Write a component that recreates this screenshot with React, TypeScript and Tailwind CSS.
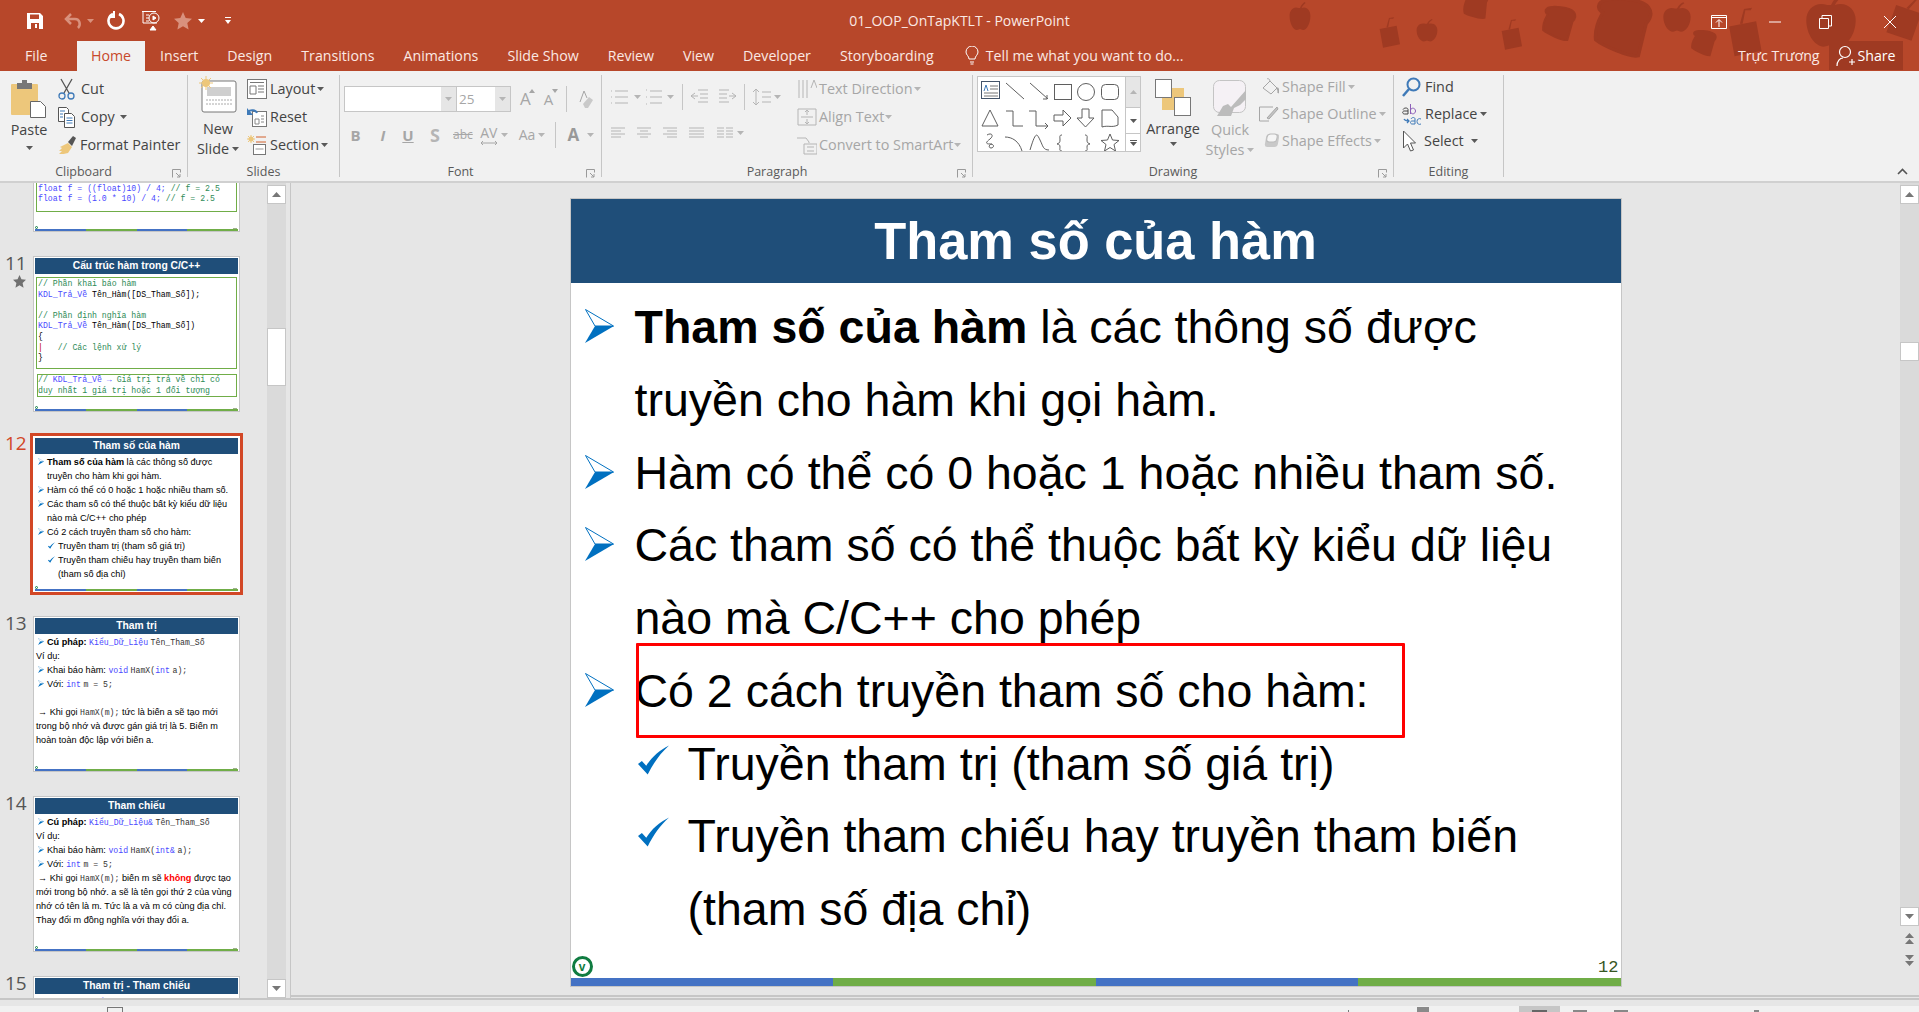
import type { ReactNode } from "react";

const ui = "font-['Open_Sans','Noto_Sans',sans-serif]";
const slideFont = "font-['Liberation_Sans',Arial,sans-serif]";
const mono = "font-['Liberation_Mono',monospace]";

function Caret({ dim = false, className = "" }: { dim?: boolean; className?: string }) {
  return (
    <svg width="7" height="4" viewBox="0 0 7 4" className={className}>
      <path d="M0 0h7L3.5 4z" fill={dim ? "#b5b5b5" : "#595959"} />
    </svg>
  );
}

function RibbonRow({ icon, label, caret, dim, gap = "gap-[6px]", h = "h-7" }: { icon: ReactNode; label: string; caret?: boolean; dim?: boolean; gap?: string; h?: string }) {
  return (
    <div className={`flex items-center ${gap} ${h} ${dim ? "text-[#a6a6a6]" : "text-[#444]"}`}>
      {icon}
      <span>{label}</span>
      {caret && <Caret dim={dim} className="ml-[-1px]" />}
    </div>
  );
}

function Launcher() {
  return (
    <svg width="9" height="9" viewBox="0 0 9 9" className="absolute right-[6px] bottom-[-1px]" fill="none" stroke="#9a9a9a">
      <path d="M.5 8.5v-8h8v3M4 4l4 4M8 5v3H5" />
    </svg>
  );
}

function Group({ w, label, launcher, children }: { w: string; label: string; launcher?: boolean; children: ReactNode }) {
  return (
    <div className={`relative ${w} my-[4px] border-r border-[#c6c6c6]`}>
      <div className="h-[89px] flex">{children}</div>
      <div className={`h-[16px] text-center text-[12.5px] leading-[16px] text-[#595959] ${launcher ? "pr-[20px]" : ""}`}>{label}</div>
      {launcher && <Launcher />}
    </div>
  );
}

/* ---------- ribbon icons ---------- */
const Scissors = () => (
  <svg width="17" height="22" viewBox="0 0 17 22" fill="none" stroke="#555" strokeWidth="1.3">
    <path d="M3 1l8 14M14 1L6 15" />
    <circle cx="4" cy="18" r="3" stroke="#3f7ab8" />
    <circle cx="13" cy="18" r="3" stroke="#3f7ab8" />
  </svg>
);
const CopyIcon = () => (
  <svg width="17" height="21" viewBox="0 0 17 21" fill="#fff" stroke="#555">
    <path d="M.5.5h8l2 2v12H.5z" />
    <path d="M6.5 6.5h7l3 3v11h-10z" />
    <path d="M8.500 11h6M8.500 13.500h6M8.500 16h6" stroke="#3f7ab8" />
    <path d="M2 4h5M2 7h3M2 10h3" stroke="#3f7ab8" />
  </svg>
);
const Brush = () => (
  <svg width="18" height="20" viewBox="0 0 18 20">
    <path d="M10 8l4 4-4 6c-3 1-6 1-9 1l3-3-3 0 3-3-2-1z" fill="#edc77b" />
    <path d="M10 7l5-6 3 2-4 8z" fill="#555" />
  </svg>
);
const PasteIcon = () => (
  <svg width="36" height="38" viewBox="0 0 36 38">
    <rect x="0" y="4" width="27" height="31" rx="1" fill="#edc77b" />
    <path d="M6 3h5V0h5v3h5v6H6z" fill="#777" />
    <path d="M19.500 21.500h10l5 5v11h-15z" fill="#fff" stroke="#666" />
  </svg>
);
const NewSlideIcon = () => (
  <svg width="38" height="37" viewBox="0 0 38 37">
    <rect x="3" y="5" width="34" height="31" rx="2" fill="#fff" stroke="#777" />
    <rect x="8" y="11" width="24" height="9" fill="#cfcfcf" />
    <path d="M7 24h26M7 28h26" stroke="#aaa" strokeDasharray="2 1" />
    <circle cx="7" cy="7" r="4" fill="#edc77b" />
    <path d="M7 0v14M0 7h14M2 2l10 10M12 2L2 12" stroke="#edc77b" />
  </svg>
);
const LayoutIcon = () => (
  <svg width="20" height="20" viewBox="0 0 20 20" fill="none" stroke="#777">
    <rect x=".5" y=".5" width="19" height="19" fill="#fff" />
    <path d="M3 3.500h14M3 7h6v8H3zM11 7h6M11 10h6M11 13h6" />
  </svg>
);
const ResetIcon = () => (
  <svg width="20" height="20" viewBox="0 0 20 20">
    <rect x="5.500" y="4.500" width="14" height="15" fill="#fff" stroke="#777" />
    <path d="M8 12h4v5H8zM14 9h3M14 12h3M14 15h3" stroke="#888" fill="none" />
    <path d="M1 5a5 4 0 0 1 9 1" stroke="#3f7ab8" strokeWidth="2" fill="none" />
    <path d="M0 1v7h6z" fill="#3f7ab8" />
  </svg>
);
const SectionIcon = () => (
  <svg width="20" height="20" viewBox="0 0 20 20" fill="none">
    <circle cx="4" cy="4" r="2.500" fill="#edc77b" />
    <path d="M4 0v8M0 4h8M1 1l6 6M7 1L1 7" stroke="#edc77b" />
    <path d="M9 2h10M9 7h10" stroke="#d2622f" />
    <rect x="6.500" y="9.500" width="12" height="10" fill="#fff" stroke="#777" />
    <path d="M8.500 14h8" stroke="#999" />
  </svg>
);
const Lines = ({ d }: { d: string }) => (
  <svg width="20" height="20" viewBox="0 0 20 20" fill="none" stroke="#b5b5b5">
    <path d={d} />
  </svg>
);
const Find = () => (
  <svg width="19" height="20" viewBox="0 0 19 20" fill="none" stroke="#3f7ab8" strokeWidth="2">
    <circle cx="11.500" cy="7.500" r="6" />
    <path d="M7 12l-6 7" strokeWidth="2.500" />
  </svg>
);
const ReplaceIcon = () => (
  <svg width="19" height="22" viewBox="0 0 19 22" className="overflow-visible">
    <path d="M2 16c1 2 3 2 5 2M5 16l2 2-2 2" fill="none" stroke="#3f7ab8" strokeWidth="1.200" />
    <path d="M1 6.500c1-2 5-2 5 0V11H2.500C0 11 0 7.500 3 8h3" fill="none" stroke="#444" />
    <path d="M8.500 1v10M8.500 7c1-3 5-2 5 1s-4 4-5 1" fill="none" stroke="#8d5fb8" />
    <path d="M9 16c1-2 4-2 4 0v5h-3c-2 0-2-3 0-3h3M19 16c-2-1-4 0-4 2.500s2 3.500 4 2.500" fill="none" stroke="#3f7ab8" />
  </svg>
);
const Cursor = () => (
  <svg width="14" height="22" viewBox="0 0 14 22" fill="#fff" stroke="#555">
    <path d="M1.500 1v17l4-4 3 7 3-1-3-7h5z" />
  </svg>
);
const Fill = () => (
  <svg width="17" height="18" viewBox="0 0 17 18" fill="none" stroke="#a6a6a6">
    <path d="M1 10l7-7 7 7-6 6z" />
    <path d="M5 1c1-1 3 0 3 3" />
    <path d="M15 10c1 1 2 3 1 5" strokeWidth="2" />
  </svg>
);
const Outline = () => (
  <svg width="20" height="18" viewBox="0 0 20 18" fill="none" stroke="#a6a6a6" className="ml-[-3px]">
    <path d="M14 2H.5v14H10" />
    <path d="M8 13l10-11 1 2-9 10z" fill="#c4c4c4" />
  </svg>
);
const Effects = () => (
  <svg width="17" height="18" viewBox="0 0 17 18">
    <rect x="2" y="2" width="13" height="13" rx="3" fill="#c9c9c9" transform="skewX(-10) translate(3 0)" />
    <rect x="3" y="2" width="10" height="8" rx="3" fill="#f5f5f5" stroke="#bbb" transform="skewX(-10) translate(3 0)" />
  </svg>
);

function Gallery() {
  return (
    <svg width="147" height="74" viewBox="0 0 147 74" fill="none" stroke="#5f5f5f">
      <rect x="3.500" y="4.500" width="18" height="17" stroke="#44546a" />
      <path d="M12 9h8M12 12h8M6 16h14M6 19h14" stroke="#777" />
      <path d="M6 14l2-6 2 6" stroke="#3f7ab8" />
      <path d="M28 6l18 16M52 6l18 16M69 18v4h-4" />
      <rect x="76.500" y="7.500" width="17" height="15" />
      <circle cx="108" cy="15" r="8.500" />
      <rect x="123.500" y="7.500" width="17" height="15" rx="4" />
      <path d="M12 33l8 16H4zM28 34h7v15h10M51 34h7v15h12M67 46l3 3-3 3" />
      <path d="M76 38h9v-5l8 8-8 8v-5h-9z" />
      <path d="M104 32h7v9h5l-8.500 9-8.500-9h5z" />
      <path d="M124 33h10l6 7v8c-6 3-10 0-16 2z" />
      <path d="M9 58c5-3 7 1 3 4s-5 5 0 5 4 4 1 4-2-4 1-4" />
      <path d="M27 60c7 0 14 4 17 14M52 73c6-20 7-16 10-10s3 10 9 10" />
      <path d="M84 58c-3 0-2 2-2 5s-1 3-3 4c2 0 3 1 3 3s-1 4 2 4M107 58c3 0 2 2 2 5s1 3 3 4c-2 0-3 1-3 3s1 4-2 4" />
      <path d="M132 57l2.500 6 6.500.5-5 4 1.500 6.500-5.500-3.500-5.500 3.500 1.500-6.500-5-4 6.500-.5z" />
    </svg>
  );
}

/* ---------- slide pieces ---------- */
function Arrow({ className = "" }: { className?: string }) {
  return (
    <svg viewBox="0 0 29 34" className={className}>
      <path d="M.5.5L28.500 17H10z" fill="#fff" stroke="#0070c0" strokeWidth="1" />
      <path d="M0 34L29 17H10z" fill="#0070c0" />
    </svg>
  );
}

function Check({ className = "" }: { className?: string }) {
  return (
    <svg viewBox="0 0 32 30" className={className}>
      <path d="M0 19l4-3 4.500 5C14 12 22 5 32 0 23 8 16 18 10 30z" fill="#0070c0" />
    </svg>
  );
}

function Bullet({ children }: { children: ReactNode }) {
  return (
    <div className="flex pl-[14px]">
      <Arrow className="w-[29px] h-[34px] mt-[18px] mr-[21px] shrink-0" />
      <div>{children}</div>
    </div>
  );
}

function SubBullet({ children }: { children: ReactNode }) {
  return (
    <div className="flex pl-[67px]">
      <Check className="w-[31px] h-[30px] mt-[17px] mr-[19px] shrink-0" />
      <div>{children}</div>
    </div>
  );
}

/* ---------- thumbnails ---------- */
function ThumbBars() {
  return (
    <div className="mt-auto">
      <div className="flex justify-between items-end h-[4px] pr-[1px]">
        <span className="w-[3px] h-[3px] rounded-full border border-[#107c41]" />
        <span className="w-[4px] h-[1px] bg-[#9db38a]" />
      </div>
      <div className="flex h-[2px]">
        <div className="flex-1 bg-[#4472c4]" />
        <div className="flex-1 bg-[#70ad47]" />
        <div className="flex-1 bg-[#4472c4]" />
        <div className="flex-1 bg-[#70ad47]" />
      </div>
    </div>
  );
}

function Thumb({ n, star, active, title, children }: { n: number; star?: boolean; active?: boolean; title?: string; children: ReactNode }) {
  return (
    <div className="flex shrink-0">
      <div className="w-[33px] pl-[5px] shrink-0">
        {n > 10 && (
          <div className={`text-[19px] leading-[20px] mt-[-3px] ${ui} ${active ? "text-[#d24726]" : "text-[#555]"}`}>{n}</div>
        )}
        {star && (
          <svg width="13" height="13" viewBox="0 0 18 18" className="ml-[8px] mt-[2px]">
            <path d="M9 0l2.700 6 6.300.7-4.700 4.300 1.300 6.500L9 14.200 3.400 17.500 4.700 11 0 6.700 6.300 6z" fill="#707070" />
          </svg>
        )}
      </div>
      <div
        className={`w-[207px] h-[156px] bg-white border flex flex-col overflow-hidden whitespace-nowrap ${slideFont} text-[9.15px] text-black leading-[14px] ${active ? "border-white outline-[3px] outline-solid outline-[#d24726]" : "border-[#c6c6c6]"}`}
      >
        <div className="mx-[1px] mt-[1px] h-[16px] shrink-0 bg-[#1f4e79] text-white text-center font-bold text-[10.300px] leading-[16px]">{title}</div>
        <div className="flex-1 flex flex-col px-[1px]">{children}</div>
      </div>
    </div>
  );
}

const ThumbArrow = () => <Arrow className="w-[6px] h-[7px] inline-block mr-[3px] shrink-0 mt-[3px]" />;
const ThumbCheck = () => <Check className="w-[7px] h-[7px] inline-block mr-[3px] shrink-0 mt-[3px]" />;
const Kw = ({ children }: { children: ReactNode }) => <span className={`${mono} text-[8.2px] text-[#4a4aff]`}>{children}</span>;
const Code = ({ children }: { children: ReactNode }) => <span className={`${mono} text-[8.2px] text-[#333]`}>{children}</span>;
const CmtLine = ({ children }: { children: ReactNode }) => <div className="h-[10.600px] whitespace-pre text-[#2e8b57]">{children}</div>;

function ArrowLine({ children }: { children: ReactNode }) {
  return (
    <div className="flex pl-[3px]">
      <ThumbArrow />
      <div>{children}</div>
    </div>
  );
}

function CheckLine({ children }: { children: ReactNode }) {
  return (
    <div className="flex pl-[13px]">
      <ThumbCheck />
      <div>{children}</div>
    </div>
  );
}

function Syntax({ amp }: { amp?: boolean }) {
  return (
    <ArrowLine>
      <b>Cú pháp:</b> <Kw>{amp ? "Kiểu_Dữ_Liệu&" : "Kiểu_Dữ_Liệu"}</Kw> <Code>Tên_Tham_Số</Code>
    </ArrowLine>
  );
}

function Sidebar() {
  return (
    <div className="w-[267px] h-full overflow-hidden shrink-0">
      <div className="flex flex-col gap-[24px] mt-[-107px]">
        <Thumb n={10} title="">
          <div className={`mx-[1px] mt-[2px] h-[116px] border border-[#70ad47] flex flex-col justify-end pb-[6px] pl-[1px] ${mono} text-[8.2px] leading-[10.600px] text-[#4a4aff] whitespace-pre`}>
            <div>float f = ((float)10) / 4; <span className="text-[#2e8b57]">// f = 2.5</span></div>
            <div>float f = (1.0 * 10) / 4; <span className="text-[#2e8b57]">// f = 2.5</span></div>
          </div>
          <ThumbBars />
        </Thumb>

        <Thumb n={11} star title="Cấu trúc hàm trong C/C++">
          <div className={`mx-[1px] mt-[3px] h-[92px] border border-[#70ad47] pl-[1px] pt-[1px] ${mono} text-[8.2px] leading-[10.600px]`}>
            <CmtLine>// Phần khai báo hàm</CmtLine>
            <div className="h-[10.600px]"><span className="text-[#4a4aff]">KDL_Trả_Về</span> Tên_Hàm([DS_Tham_Số]);</div>
            <div className="h-[10.600px]" />
            <CmtLine>// Phần định nghĩa hàm</CmtLine>
            <div className="h-[10.600px]"><span className="text-[#4a4aff]">KDL_Trả_Về</span> Tên_Hàm([DS_Tham_Số])</div>
            <div className="h-[10.600px]">{"{"}</div>
            <CmtLine><span className="text-[#c00000]">|</span>{"   // Các lệnh xử lý"}</CmtLine>
            <div className="h-[10.600px]">{"}"}</div>
          </div>
          <div className={`ml-[2px] mr-[1px] mt-[5px] h-[23px] border border-[#70ad47] ${mono} text-[8.2px] leading-[10.600px] text-[#2e8b57]`}>
            <div className="whitespace-pre">// <span className="text-[#4a4aff]">KDL_Trả_Về →</span> Giá trị trả về chỉ có</div>
            <div className="whitespace-pre">duy nhất 1 giá trị hoặc 1 đối tượng</div>
          </div>
          <ThumbBars />
        </Thumb>

        <Thumb n={12} active title="Tham số của hàm">
          <div className="pt-[1px]">
            <ArrowLine><b>Tham số của hàm</b> là các thông số được<br />truyền cho hàm khi gọi hàm.</ArrowLine>
            <ArrowLine>Hàm có thể có 0 hoặc 1 hoặc nhiều tham số.</ArrowLine>
            <ArrowLine>Các tham số có thể thuộc bất kỳ kiểu dữ liệu<br />nào mà C/C++ cho phép</ArrowLine>
            <ArrowLine>Có 2 cách truyền tham số cho hàm:</ArrowLine>
            <CheckLine>Truyền tham trị (tham số giá trị)</CheckLine>
            <CheckLine>Truyền tham chiếu hay truyền tham biến<br />(tham số địa chỉ)</CheckLine>
          </div>
          <ThumbBars />
        </Thumb>

        <Thumb n={13} title="Tham trị">
          <div className="pt-[1px] [&>div]:h-[14px]">
            <Syntax />
            <div className="pl-[1px]">Ví dụ:</div>
            <ArrowLine>Khai báo hàm: <Kw>void</Kw> <Code>HamX(</Code><Kw>int</Kw> <Code>a);</Code></ArrowLine>
            <ArrowLine>Với: <Kw>int</Kw> <Code>m = 5;</Code></ArrowLine>
            <div />
            <div className="pl-[3px]">→ Khi gọi <Code>HamX(m);</Code> tức là biến a sẽ tạo mới</div>
            <div className="pl-[1px]">trong bộ nhớ và được gán giá trị là 5. Biến m</div>
            <div className="pl-[1px]">hoàn toàn độc lập với biến a.</div>
          </div>
          <ThumbBars />
        </Thumb>

        <Thumb n={14} title="Tham chiếu">
          <div className="pt-[1px] [&>div]:h-[14px]">
            <Syntax amp />
            <div className="pl-[1px]">Ví dụ:</div>
            <ArrowLine>Khai báo hàm: <Kw>void</Kw> <Code>HamX(</Code><Kw>int&amp;</Kw> <Code>a);</Code></ArrowLine>
            <ArrowLine>Với: <Kw>int</Kw> <Code>m = 5;</Code></ArrowLine>
            <div className="pl-[3px]">→ Khi gọi <Code>HamX(m);</Code> biến m sẽ <b className="text-[#ff0000]">không</b> được tạo</div>
            <div className="pl-[1px]">mới trong bộ nhớ. a sẽ là tên gọi thứ 2 của vùng</div>
            <div className="pl-[1px]">nhớ có tên là m. Tức là a và m có cùng địa chỉ.</div>
            <div className="pl-[1px]">Thay đổi m đồng nghĩa với thay đổi a.</div>
          </div>
          <ThumbBars />
        </Thumb>

        <Thumb n={15} title="Tham trị - Tham chiếu">
          <div className="pt-[1px]">
            <Syntax />
          </div>
        </Thumb>
      </div>
    </div>
  );
}

function ScrollButton({ down }: { down?: boolean }) {
  return (
    <div className="w-[19px] h-[19px] bg-white border border-[#c6c6c6] flex items-center justify-center shrink-0">
      <svg width="9" height="5" viewBox="0 0 9 5">
        <path d={down ? "M0 0h9L4.500 5z" : "M0 5h9L4.500 0z"} fill="#777" />
      </svg>
    </div>
  );
}

function Decoration() {
  const c = "#9f3a22";
  const apple = "M0-9c2-4 4-5 6-6l1 1c-2 1-4 3-5 5 6-2 11 2 11 8 0 8-5 14-9 14-2 0-3-1-4-1s-2 1-4 1c-4 0-9-6-9-14 0-6 5-10 11-8z";
  const toast = "M-14-12c4-4 24-6 29-1 3 3 2 7 0 10l-2 20c-5 2-22-3-27-6-2-8 1-14 2-17-3-1-4-4-2-6z";
  const box = "M-11-7l20-4 4 22-20 4zM-3-9l3-11 6-1-1 2-4 0-2 10z";
  return (
    <svg className="absolute left-[1280px] top-0 w-[639px] h-[71px] pointer-events-none" viewBox="1280 0 639 71" fill={c}>
      <path d={apple} transform="translate(1300 17) scale(.8 1)" />
      <path d={box} transform="translate(1389 35) scale(.85)" />
      <path d={apple} transform="translate(1427 31) scale(.8)" />
      <path d={box} transform="translate(1511 37) scale(.85)" />
      <path d={toast} transform="translate(1475 5) scale(.8)" />
      <path d={toast} transform="translate(1558 22) rotate(10) scale(.95)" stroke={c} strokeWidth="2" />
      <path d={toast} transform="translate(1621 25) rotate(8) scale(1.65)" stroke={c} strokeWidth="2" />
      <path d={apple} transform="translate(1677 18) scale(1.050)" />
      <path d={toast} transform="translate(1703 42) rotate(10) scale(.75)" />
      <path d={box} transform="translate(1744 36) scale(1.350)" />
      <path d={apple} transform="translate(1831 22) scale(1.900)" />
      <path d={box} transform="translate(1904 20) rotate(30) scale(1.300)" />
    </svg>
  );
}

export default function App() {
  const tabs = ["Insert", "Design", "Transitions", "Animations", "Slide Show", "Review", "View", "Developer", "Storyboarding"];
  return (
    <div className={`w-[1919px] h-[1012px] overflow-hidden flex flex-col bg-[#e6e6e6] ${ui}`}>
      {/* title bar + tabs */}
      <div className="relative h-[71px] bg-[#b7472a] text-white shrink-0">
        <Decoration />
        <div className="relative h-[41px] flex items-center pl-[27px]">
          <svg width="16" height="16" viewBox="0 0 16 16" className="mr-[21px]">
            <path fillRule="evenodd" fill="#fff" d="M0 0h13l3 3v13H0zM3 1.500V6h9V1.500zM4 10v6h8v-6zM8 11h2v4H8z" />
          </svg>
          <svg width="20" height="16" viewBox="0 0 20 16" fill="none" stroke="#d9917d" strokeWidth="2.500" className="mr-[3px]">
            <path d="M14 15c3-3 2-9-3-9H3M7 1L2 6l5 5" />
          </svg>
          <svg width="7" height="4" viewBox="0 0 7 4" className="mr-[13px]"><path d="M0 0h7L3.500 4z" fill="#d9917d" /></svg>
          <svg width="18" height="20" viewBox="0 0 18 20" fill="none" stroke="#fff" strokeWidth="2.600" className="mr-[16px]">
            <path d="M6 3a7.500 7.500 0 1 0 6 0" />
            <path d="M7 0v6H2" strokeWidth="2" />
          </svg>
          <svg width="20" height="22" viewBox="0 0 20 22" fill="none" stroke="#fff" className="mr-[13px]">
            <path d="M1 1.500h14M2 2v11h14M5 5h3M5 8h3M5 11h3" />
            <circle cx="13" cy="8" r="5" />
            <path d="M12 6l3 2-3 2z" fill="#fff" />
            <path d="M9 20h6l-3-4z" fill="#fff" />
          </svg>
          <svg width="18" height="18" viewBox="0 0 18 18" className="mr-[6px]">
            <path d="M9 0l2.700 6 6.300.7-4.700 4.300 1.300 6.500L9 14.200 3.400 17.500 4.700 11 0 6.700 6.300 6z" fill="#d9917d" />
          </svg>
          <svg width="7" height="4" viewBox="0 0 7 4" className="mr-[20px]"><path d="M0 0h7L3.500 4z" fill="#fff" /></svg>
          <svg width="6" height="7" viewBox="0 0 6 7"><path d="M0 0h6v1H0zM0 3h6L3 7z" fill="#fff" /></svg>
        </div>
        <div className="absolute inset-x-0 top-[11px] text-center text-[14px] leading-[20px] text-[#fbe9e4]">01_OOP_OnTapKTLT - PowerPoint</div>

        <div className="absolute top-[14px] left-[1711px] flex items-center">
          <svg width="16" height="16" viewBox="0 0 16 16" fill="none" stroke="#fff" className="mr-[42px]">
            <path d="M.5 1.500h15v13H.5zM1 3.500h14M8 13V6M5 8.500l3-3 3 3" />
          </svg>
          <svg width="12" height="16" viewBox="0 0 12 16" className="mr-[38px]"><path d="M0 8h12" stroke="#fff" /></svg>
          <svg width="13" height="14" viewBox="0 0 13 14" fill="none" stroke="#fff" className="mr-[51px]">
            <path d="M.5 3.500h9v10h-9zM3 3V.5h9.500V11H10" />
          </svg>
          <svg width="14" height="14" viewBox="0 0 14 14" stroke="#fff"><path d="M1 1l12 12M13 1L1 13" /></svg>
        </div>

        <div className="absolute left-0 right-0 bottom-0 h-[30px] flex text-[14.200px] leading-[30px] text-[#fbe9e4]">
          <div className="w-[77px] pl-[25px]">File</div>
          <div className="w-[68px] bg-[#f1f1f1] text-center text-[#c8492b]">Home</div>
          <div className="flex pl-[15px] gap-[29px]">
            {tabs.map((t) => <div key={t}>{t}</div>)}
          </div>
          <svg width="14" height="21" viewBox="0 0 14 21" fill="none" stroke="#fff" className="ml-[31px] mt-[5px]">
            <path d="M4 13c0-3-3-4-3-7a6 6 0 0 1 12 0c0 3-3 4-3 7zM5 16h4M5.500 18h3" />
          </svg>
          <div className="ml-[7px]">Tell me what you want to do...</div>
          <div className="absolute left-[1738px] top-0">Trực Trương</div>
          <div className="absolute left-[1829px] w-[74px] top-0 h-[29px] bg-[#9f3a22] flex items-center justify-center gap-[2px] text-white">
            <svg width="19" height="22" viewBox="0 0 19 22" fill="none" stroke="#fff" strokeWidth="1.200">
              <circle cx="9" cy="7" r="5.500" />
              <path d="M1 21c0-5 3-8 6-8M13 17h6M16 14v6" />
            </svg>
            <span>Share</span>
          </div>
        </div>
      </div>

      {/* ribbon */}
      <div className="relative h-[112px] bg-[#f1f1f1] border-b-2 border-[#d0d0d0] shrink-0 flex text-[14.400px] leading-[28px]">
        <Group w="w-[188px]" label="Clipboard" launcher>
          <div className="w-[56px] flex flex-col items-center pt-[5px] pl-[2px] text-[#444]">
            <PasteIcon />
            <div className="leading-[18px] mt-[3px]">Paste</div>
            <Caret className="mt-[7px]" />
          </div>
          <div className="flex flex-col pl-[2px]">
            <RibbonRow icon={<Scissors />} label="Cut" />
            <RibbonRow icon={<CopyIcon />} label="Copy" caret />
            <RibbonRow icon={<Brush />} label="Format Painter" gap="gap-[4px]" />
          </div>
        </Group>

        <Group w="w-[152px]" label="Slides">
          <div className="w-[59px] flex flex-col items-center pt-[1px] text-[#444] pl-[1px]">
            <NewSlideIcon />
            <div className="leading-[20px] mt-[6px]">New</div>
            <div className="leading-[20px] flex items-center gap-[3px]">Slide <Caret /></div>
          </div>
          <div className="flex flex-col">
            <RibbonRow icon={<LayoutIcon />} label="Layout" caret gap="gap-[3px]" />
            <RibbonRow icon={<ResetIcon />} label="Reset" gap="gap-[3px]" />
            <RibbonRow icon={<SectionIcon />} label="Section" caret gap="gap-[3px]" />
          </div>
        </Group>

        <Group w="w-[262px]" label="Font" launcher>
          <div className="flex flex-col pl-[4px] pt-[11px] text-[#a6a6a6]">
            <div className="flex items-center h-[26px]">
              <div className="w-[112px] h-[26px] bg-white border border-r-0 border-[#c6c6c6] flex justify-end">
                <div className="w-[15px] bg-[#e6e6e6] flex items-center justify-center"><Caret dim /></div>
              </div>
              <div className="w-[55px] h-[26px] bg-white border border-[#c6c6c6] flex justify-between pl-[2px] text-[13.500px] leading-[24px]">
                25
                <div className="w-[15px] bg-[#e6e6e6] flex items-center justify-center"><Caret dim /></div>
              </div>
              <div className="ml-[9px] text-[17px] leading-[26px] flex items-start">A<svg width="6" height="4" viewBox="0 0 6 4" className="mt-[3px] ml-[-2px]"><path d="M0 4h6L3 0z" fill="#a6a6a6" /></svg></div>
              <div className="ml-[9px] text-[15px] leading-[26px] flex items-start">A<svg width="6" height="4" viewBox="0 0 6 4" className="mt-[3px] ml-[-1px]"><path d="M0 0h6L3 4z" fill="#a6a6a6" /></svg></div>
              <div className="w-px h-[26px] bg-[#c6c6c6] ml-[8px]" />
              <svg width="16" height="19" viewBox="0 0 16 19" className="ml-[10px]">
                <path d="M3 12l4-11 3 7" fill="none" stroke="#a6a6a6" />
                <path d="M6 14l6-7 4 3-5 8H8z" fill="#c9c9c9" />
              </svg>
            </div>
            <div className="flex items-center h-[26px] mt-[10px] text-[15px] leading-[26px]">
              <span className="font-bold w-[21px] text-center ml-[1px]">B</span>
              <span className="italic font-bold w-[20px] text-center ml-[7px]">I</span>
              <span className="underline font-bold w-[20px] text-center ml-[5px]">U</span>
              <span className="font-bold w-[20px] text-center ml-[7px] text-[18px] text-[#b5b5b5]">S</span>
              <span className="line-through text-[12px] ml-[8px]">abc</span>
              <div className="flex flex-col items-center ml-[7px]">
                <span className="text-[14px] leading-[15px]">AV</span>
                <svg width="18" height="6" viewBox="0 0 18 6" fill="none" stroke="#a6a6a6"><path d="M1 3h16M3 1L1 3l2 2M15 1l2 2-2 2" /></svg>
              </div>
              <Caret dim className="ml-[3px]" />
              <span className="ml-[11px] text-[14px]">Aa</span>
              <Caret dim className="ml-[3px]" />
              <div className="w-px h-[26px] bg-[#c6c6c6] ml-[10px]" />
              <span className="ml-[11px] font-bold text-[17px] text-[#999]">A</span>
              <Caret dim className="ml-[8px]" />
            </div>
          </div>
        </Group>

        <Group w="w-[371px]" label="Paragraph" launcher>
          <div className="w-[195px] flex flex-col pl-[7px] pt-[9px] shrink-0">
            <div className="flex items-center h-[26px]">
              <Lines d="M2 4h1M2 10h1M2 16h1M6 4h13M6 10h13M6 16h13" />
              <Caret dim className="ml-[5px] mr-[3px]" />
              <Lines d="M2 3h1M2 10h1M2 17h1M6 4h12M6 10h12M6 16h12" />
              <Caret dim className="ml-[3px] mr-[8px]" />
              <div className="w-px h-[26px] bg-[#c6c6c6] mr-[7px]" />
              <Lines d="M8 3h10M10 7h8M10 11h8M8 15h10M1 9h7M5 6L1 9l4 3" />
              <div className="w-[7px]" />
              <Lines d="M2 3h10M2 7h8M2 11h8M2 15h10M12 9h7M15 6l4 3-4 3" />
              <div className="w-px h-[26px] bg-[#c6c6c6] mx-[7px]" />
              <Lines d="M4 2v16M1 5l3-3 3 3M1 15l3 3 3-3M10 5h9M10 10h9M10 15h9" />
              <Caret dim className="ml-[2px]" />
            </div>
            <div className="flex items-center h-[26px] mt-[10px] text-[#a6a6a6]">
              <Lines d="M2 5h14M2 8h10M2 11h14M2 14h10" />
              <div className="w-[6px]" />
              <Lines d="M2 5h14M5 8h8M2 11h14M5 14h8" />
              <div className="w-[6px]" />
              <Lines d="M2 5h14M6 8h10M2 11h14M6 14h10" />
              <div className="w-[6px]" />
              <Lines d="M2 5h15M2 8h15M2 11h15M2 14h15" />
              <div className="w-[8px]" />
              <Lines d="M2 5h7M2 8h7M2 11h7M2 14h7M11 5h7M11 8h7M11 11h7M11 14h7" />
              <Caret dim className="ml-[2px]" />
            </div>
          </div>
          <div className="flex flex-col">
            <RibbonRow dim caret label="Text Direction" gap="gap-[2px]" icon={<Lines d="M2 1v18M6 1v18M10 1v18M14 9l3-8 3 8" />} />
            <RibbonRow dim caret label="Align Text" gap="gap-[2px]" icon={<Lines d="M1 2v16h18V2zM10 3v5M8 5l2-2 2 2M10 17v-5M8 15l2 2 2-2M4 10h12" />} />
            <RibbonRow dim caret label="Convert to SmartArt" gap="gap-[2px]" icon={<Lines d="M0 3h9l3 4v1M7 9h13v10H7zM10 12h7M10 16h7" />} />
          </div>
        </Group>

        <Group w="w-[421px]" label="Drawing" launcher>
          <div className="ml-[4px] mt-[1px] h-[76px] w-[164px] shrink-0 bg-white border border-[#c6c6c6] flex">
            <Gallery />
            <div className="flex-1 flex flex-col border-l border-[#c6c6c6]">
              <div className="h-[30px] bg-[#e6e6e6] flex items-center justify-center"><Caret dim className="rotate-180" /></div>
              <div className="h-[27px] border-y border-[#c6c6c6] flex items-center justify-center"><Caret /></div>
              <div className="flex-1 flex flex-col items-center justify-center gap-[1px]"><div className="w-[7px] h-px bg-[#595959]" /><Caret /></div>
            </div>
          </div>
          <div className="w-[60px] ml-[2px] flex flex-col items-center pt-[4px] text-[#444] shrink-0">
            <svg width="36" height="37" viewBox="0 0 36 37">
              <rect x="7" y="9" width="22" height="22" fill="#edc77b" />
              <rect x=".5" y=".5" width="16" height="18" fill="#fff" stroke="#777" />
              <rect x="19.500" y="18.500" width="16" height="18" fill="#fff" stroke="#777" />
            </svg>
            <div className="leading-[18px] mt-[4px]">Arrange</div>
            <Caret className="mt-[4px]" />
          </div>
          <div className="w-[48px] ml-[3px] flex flex-col items-center pt-[5px] text-[#a6a6a6] shrink-0">
            <svg width="34" height="38" viewBox="0 0 34 38">
              <rect x=".5" y=".5" width="32" height="32" rx="6" fill="#f5f1f5" stroke="#c4c4c4" />
              <path d="M33 10L18 27 15 24 10 26 4 36h14l3-8 6-3 6-6z" fill="#bcbcbc" />
            </svg>
            <div className="leading-[20px] mt-[2px]">Quick</div>
            <div className="leading-[20px] flex items-center gap-[3px]">Styles <Caret dim /></div>
          </div>
          <div className="flex flex-col ml-[8px] mt-[-2px]">
            <RibbonRow dim caret label="Shape Fill" gap="gap-[3px]" h="h-[27px]" icon={<Fill />} />
            <RibbonRow dim caret label="Shape Outline" gap="gap-[3px]" h="h-[27px]" icon={<Outline />} />
            <RibbonRow dim caret label="Shape Effects" gap="gap-[3px]" h="h-[27px]" icon={<Effects />} />
          </div>
        </Group>

        <Group w="w-[110px]" label="Editing">
          <div className="flex flex-col pl-[8px] mt-[-2px]">
            <RibbonRow icon={<Find />} label="Find" gap="gap-[4px]" h="h-[27px]" />
            <RibbonRow icon={<ReplaceIcon />} label="Replace" caret gap="gap-[4px]" h="h-[27px]" />
            <RibbonRow icon={<Cursor />} label="Select" caret gap="gap-[8px]" h="h-[27px]" />
          </div>
        </Group>

        <svg width="11" height="7" viewBox="0 0 11 7" className="absolute left-[1897px] bottom-[6px]" fill="none" stroke="#555" strokeWidth="1.600">
          <path d="M1 6l4.500-4.500L10 6" />
        </svg>
      </div>

      {/* work area */}
      <div className="flex-1 min-h-0 flex border-b-2 border-[#c6c6c6] mb-[6px]">
        <Sidebar />
        <div className="w-[19px] bg-[#dadada] flex flex-col pt-[2px] shrink-0">
          <ScrollButton />
          <div className="h-[124px]" />
          <div className="h-[58px] bg-white border border-[#c6c6c6]" />
          <div className="flex-1" />
          <ScrollButton down />
        </div>
        <div className="w-[4px]" />
        <div className="flex-1 flex flex-col border-l border-[#c6c6c6] min-w-0">
          <div className="flex-1 flex min-h-0 border-b-2 border-[#c6c6c6] mb-[1px]">
            <div className="flex-1 flex justify-center pt-[15px]">
              <div className={`relative w-[1052px] h-[789px] bg-white border border-[#c6c6c6] flex flex-col ${slideFont}`}>
                <div className="h-[84px] bg-[#1f4e79] text-white text-center font-bold text-[52.400px] leading-[84px]">Tham số của hàm</div>
                <div className="flex-1 pt-[8px] text-[46.500px] leading-[72.750px] text-black">
                  <Bullet><b>Tham số của hàm</b> là các thông số được<br />truyền cho hàm khi gọi hàm.</Bullet>
                  <Bullet>Hàm có thể có 0 hoặc 1 hoặc nhiều tham số.</Bullet>
                  <Bullet>Các tham số có thể thuộc bất kỳ kiểu dữ liệu<br />nào mà C/C++ cho phép</Bullet>
                  <Bullet>Có 2 cách truyền tham số cho hàm:</Bullet>
                  <SubBullet>Truyền tham trị (tham số giá trị)</SubBullet>
                  <SubBullet>Truyền tham chiếu hay truyền tham biến<br />(tham số địa chỉ)</SubBullet>
                </div>
                <div className="flex justify-between items-end pl-[1px] pr-[2px] pb-[1px]">
                  <div className="w-[21px] h-[21px] rounded-full border-[3px] border-[#107c41] flex items-center justify-center text-[#107c41] text-[12px] leading-none font-bold">v</div>
                  <div className={`${mono} text-[17px] leading-[18px] text-[#375623]`}>12</div>
                </div>
                <div className="flex h-[8px]">
                  <div className="flex-1 bg-[#4472c4]" />
                  <div className="flex-1 bg-[#70ad47]" />
                  <div className="flex-1 bg-[#4472c4]" />
                  <div className="flex-1 bg-[#70ad47]" />
                </div>
                <div className="absolute left-[65px] top-[444px] w-[769px] h-[95px] border-[3px] border-[#ff0000] rounded-[1px]" />
              </div>
            </div>
            <div className="w-[19px] shrink-0 bg-[#dadada] flex flex-col pt-[2px]">
              <ScrollButton />
              <div className="h-[138px]" />
              <div className="h-[19px] bg-white border border-[#c6c6c6]" />
              <div className="flex-1" />
              <ScrollButton down />
              <div className="h-[69px] bg-[#e6e6e6] flex flex-col items-center pt-[7px] gap-[11px]">
                <svg width="9" height="11" viewBox="0 0 9 11" fill="#777"><path d="M0 5h9L4.500 0zM0 11h9L4.500 6z" /></svg>
                <svg width="9" height="11" viewBox="0 0 9 11" fill="#777"><path d="M0 0h9L4.500 5zM0 6h9L4.500 11z" /></svg>
              </div>
            </div>
          </div>
        </div>
      </div>

      {/* status bar, only its top edge is on screen */}
      <div className="relative h-[6px] bg-[#f1f1f1] shrink-0 overflow-hidden">
        <div className="absolute left-[107px] top-[1px] w-[16px] h-[8px] border border-[#777]" />
        <div className="absolute left-[1348px] top-[4px] w-px h-[4px] bg-[#777]" />
        <div className="absolute left-[1417px] top-[1px] w-[12px] h-[8px] bg-[#8a8a8a]" />
        <div className="absolute left-[1519px] top-0 w-[41px] h-[6px] bg-[#c6c6c6]">
          <div className="mx-[13px] mt-[4px] h-[2px] bg-[#666]" />
        </div>
        <div className="absolute left-[1573px] top-[4px] w-[14px] h-[2px] bg-[#888]" />
        <div className="absolute left-[1614px] top-[4px] w-[14px] h-[2px] bg-[#888]" />
        <div className="absolute left-[1754px] top-[4px] w-[5px] h-[2px] bg-[#888]" />
      </div>
    </div>
  );
}
